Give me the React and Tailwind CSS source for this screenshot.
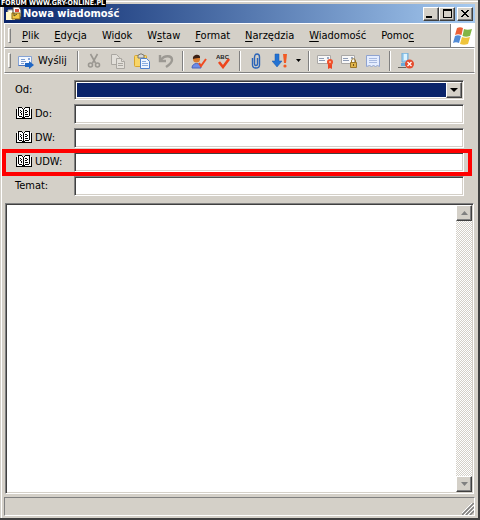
import React from 'react';

const menuItems = [
  { before: '', key: 'P', after: 'lik' },
  { before: '', key: 'E', after: 'dycja' },
  { before: 'Wi', key: 'd', after: 'ok' },
  { before: 'W', key: 's', after: 'taw' },
  { before: '', key: 'F', after: 'ormat' },
  { before: '', key: 'N', after: 'arzędzia' },
  { before: '', key: 'W', after: 'iadomość' },
  { before: 'Pomo', key: 'c', after: '' },
];

// Raised and sunken edges shared by the window parts
const raised = 'border border-t-white border-l-white border-r-[#404040] border-b-[#404040] bg-[#d4d0c8] shadow-[inset_-1px_-1px_0_#808080]';
const sunken = 'border border-t-[#808080] border-l-[#808080] border-r-white border-b-white shadow-[inset_1px_1px_0_#404040,inset_-1px_-1px_0_#d4d0c8]';

function MailIcon() {
  return (
    <svg className="size-4 shrink-0" viewBox="0 0 16 16">
      <path d="M.5 3.500h13v9H.5z" fill="#f4f8ff" stroke="#86a3d4" />
      <path d="M.5 12.500h8" stroke="#4a74bd" />
      <path d="M3 6.500h4M3 8.500h5M3 10.500h3" stroke="#7c9ccf" />
      <path d="M10 5h2v2h-2z" fill="#86a6da" />
      <path d="M7 10h4V8l5 4-5 4v-2H7z" fill="#1f66c4" />
    </svg>
  );
}

function CutIcon() {
  return (
    <svg className="size-4" viewBox="0 0 16 16" fill="none" stroke="#9a9791" strokeWidth="1.600">
      <path d="M4.500 1l5 9M11.500 1l-5 9" />
      <circle cx="4.500" cy="12" r="2" />
      <circle cx="11.500" cy="12" r="2" />
    </svg>
  );
}

function CopyIcon() {
  return (
    <svg className="size-4" viewBox="0 0 16 16" fill="#e2dfd9" stroke="#aaa7a1">
      <path d="M1.500 1.500h5l3 3v7h-8z" />
      <path d="M6.500 5.500h5l3 3v7h-8z" />
      <path d="M11.500 5.500v3h3M8 10.500h5M8 12.500h5" />
    </svg>
  );
}

function PasteIcon() {
  return (
    <svg className="size-4" viewBox="0 0 16 16">
      <rect x=".5" y="2.500" width="12" height="11" rx="1" fill="#f8d568" stroke="#d8a52c" />
      <path d="M4 2h1l1-1h2l1 1h1v3H4z" fill="#d8d8d8" stroke="#77766f" />
      <path d="M6.500 5.500h6l3 3v7h-9z" fill="#eef5ff" stroke="#4f80cb" />
      <path d="M8 8.500h4M8 10.500h6M8 12.500h6" stroke="#89acdf" />
    </svg>
  );
}

function UndoIcon() {
  return (
    <svg className="size-4" viewBox="0 0 16 16" fill="none" stroke="#9c9993" strokeWidth="2.400">
      <path d="M2 2v6h6" />
      <path d="M3 7c3-5 11-5 11 0 0 3-3 5-6 7" />
    </svg>
  );
}

function NamesIcon() {
  return (
    <svg className="size-4" viewBox="0 0 16 16">
      <path d="M1 15c0-6 9-6 9 0z" fill="#6e8ce8" stroke="#4964bd" />
      <circle cx="5.500" cy="6" r="3.500" fill="#d8792c" />
      <path d="M2 6c-1-5 8-6 7-1-3 0-4 0-7 1z" fill="#3b2116" />
      <path d="M8 10l2 3 5-7" fill="none" stroke="#f04a20" strokeWidth="2" />
    </svg>
  );
}

function SpellIcon() {
  return (
    <svg className="size-4" viewBox="0 0 16 16">
      <text x="1" y="6" fontSize="6" fontWeight="bold" fontFamily="Liberation Sans, sans-serif" fill="#222">ABC</text>
      <path d="M4 9l4 5 6-8" fill="none" stroke="#ee451c" strokeWidth="2.600" />
    </svg>
  );
}

function ClipIcon() {
  return (
    <svg className="size-4" viewBox="0 0 16 16" fill="none" stroke="#2a64b8" strokeWidth="1.400">
      <path d="M4.500 5v7c0 4 7 4 7 0V4c0-4-5-4-5 0v7c0 2 3 2 3 0V5" />
    </svg>
  );
}

function PriorityIcon() {
  return (
    <svg className="size-4" viewBox="0 0 16 16">
      <path d="M3 1h4v7h3l-5 6-5-6h3z" fill="#2272d2" stroke="#1a59ad" strokeWidth=".5" />
      <path d="M11 1h4l-1 9h-2z" fill="#f25a24" />
      <circle cx="13" cy="13" r="1.600" fill="#f25a24" />
    </svg>
  );
}

function SignIcon() {
  return (
    <svg className="size-4" viewBox="0 0 16 16">
      <path d="M.5 2.500h13v8H.5z" fill="#f8f8f8" stroke="#aaa8a6" />
      <path d="M2 5.500h5M2 7.500h6" stroke="#8e9bb4" />
      <path d="M10 4h2v2h-2z" fill="#9aa7c0" />
      <path d="M11 11v5l2-1 2 1v-5z" fill="#ed4624" />
      <circle cx="13" cy="9" r="3" fill="#f0512c" />
      <circle cx="13" cy="9" r="1" fill="#ffc1a2" />
    </svg>
  );
}

function EncryptIcon() {
  return (
    <svg className="size-4" viewBox="0 0 16 16">
      <path d="M.5 2.500h13v8H.5z" fill="#f8f8f8" stroke="#aaa8a6" />
      <path d="M2 5.500h5M2 7.500h6" stroke="#8e9bb4" />
      <path d="M10 4h2v2h-2z" fill="#9aa7c0" />
      <path d="M10.500 10V8c0-3 4-3 4 0v2" fill="none" stroke="#987526" />
      <path d="M9.500 9.500h6v5h-6z" fill="#dfb44c" stroke="#9b7628" />
      <path d="M12 11h1v2h-1z" fill="#70521a" />
    </svg>
  );
}

function ReceiptIcon() {
  return (
    <svg className="size-4" viewBox="0 0 16 16">
      <path d="M1.500 2.500h13v11l-2-1-2 1-2-1-2 1-2-1-3 1z" fill="#e4edff" stroke="#8fa3d0" />
      <path d="M4 5.500h8M4 7.500h8M4 9.500h8" stroke="#a7b9df" />
    </svg>
  );
}

function OfflineIcon() {
  return (
    <svg className="size-4" viewBox="0 0 16 16">
      <path d="M4 0h6v9H4z" fill="#a4d5f5" stroke="#6fa9d3" />
      <path d="M6 1h3v6H6z" fill="#ddf3ff" />
      <path d="M3 10h7v3H3z" fill="#69a9da" />
      <path d="M0 14.500h8" stroke="#66645f" />
      <circle cx="11.500" cy="11" r="4.500" fill="#e44b2d" />
      <path d="M9.500 9l4 4M13.500 9l-4 4" stroke="#fff" strokeWidth="1.300" />
    </svg>
  );
}

function WindowsLogo() {
  return (
    <svg className="size-5" viewBox="0 0 20 20">
      <path d="M4 2c2-1 4-1 6 0L8.500 9C6 8 4 8 2 9z" fill="#ec6137" />
      <path d="M11 3c2 1 5 1 8 0l-2 7c-3 1-5 1-7.500 0z" fill="#82b545" />
      <path d="M2 10c2-1 4-1 6 0l-2 7c-2-1-4-1-6 0z" fill="#528bd5" />
      <path d="M9 11c2 1 5 1 8 0l-2 7c-3 1-5 1-8 0z" fill="#efc43b" />
    </svg>
  );
}

function BookIcon() {
  return (
    <svg className="h-3 w-4 shrink-0" viewBox="0 0 16 12" shapeRendering="crispEdges">
      <path d="M1 1h14v10H1z" fill="#fff" />
      {/* cover and spine */}
      <path d="M2 0h4v1H2zM9 0h4v1H9zM6 1h1v1H6zM8 1h1v1H8zM7 2h1v9H7zM2 0h1v9H2zM13 0h1v9h-1zM0 2h1v10H0zM15 2h1v10h-1zM3 9h3v1H3zM9 9h4v1H9zM6 10h1v1H6zM8 10h1v1H8zM0 11h15v1H0z" />
      {/* lettering on the pages */}
      <path d="M4 3h1v1H4zM5 4h1v1H5zM4 5h1v1H4zM5 6h1v2H5zM9 3h2v1H9zM11 4h1v1h-1zM9 5h2v1H9zM9 7h3v1H9z" />
    </svg>
  );
}

function TitleIcon() {
  return (
    <svg className="size-4 shrink-0" viewBox="0 0 16 16">
      <path d="M2 4h7v9H2z" fill="#fff" stroke="#b5b59e" />
      <path d="M0 6h9v8H0z" fill="#fff8c8" />
      <path d="M7 1h6l2 3v7H7z" fill="#fff" stroke="#45423a" />
      <path d="M9 3h4v3H9z" fill="#db4c3a" />
      <path d="M6 7h8v6H6z" fill="#f3c842" stroke="#8c6919" />
      <path d="M8 7v3l3-2" fill="none" stroke="#574b25" />
    </svg>
  );
}

function Grip() {
  return <div className="my-1 ml-[3px] w-[3px] self-stretch border border-t-white border-l-white border-r-[#808080] border-b-[#808080]" />;
}

function Separator() {
  return <div className="mx-1 h-5 w-px bg-[#808080] shadow-[1px_0_0_#fff]" />;
}

function ToolButton({ label, children }) {
  return (
    <button type="button" aria-label={label} className="flex h-6 w-6 shrink-0 items-center justify-center">
      {children}
    </button>
  );
}

function TitleBar() {
  return (
    <header className="flex h-[19px] shrink-0 items-center bg-linear-to-r from-[#0a246a] to-[#a6caf0] px-0.5 text-white">
      <TitleIcon />
      <h1 className="ml-px flex-1 truncate font-bold">Nowa wiadomość</h1>
      <button type="button" aria-label="Minimalizuj" className={`flex h-[14px] w-4 items-end justify-center pb-0.5 ${raised}`}>
        <span className="mr-1 h-0.5 w-1.5 bg-black" />
      </button>
      <button type="button" aria-label="Maksymalizuj" className={`flex h-[14px] w-4 items-center justify-center ${raised}`}>
        <span className="h-[9px] w-[9px] border border-t-2 border-black" />
      </button>
      <button type="button" aria-label="Zamknij" className={`ml-0.5 flex h-[14px] w-4 items-center justify-center ${raised}`}>
        <svg className="h-[7px] w-2" viewBox="0 0 8 7" shapeRendering="crispEdges">
          <path d="M0 0h2v1h1v1h2V1h1V0h2v1H7v1H6v1H5v1h1v1h1v1h1v1H6V6H5V5H3v1H2v1H0V6h1V5h1V4h1V3H2V2H1V1H0z" fill="#000" />
        </svg>
      </button>
    </header>
  );
}

function MenuBar() {
  return (
    <nav className="flex h-[25px] shrink-0 items-center border border-t-white border-l-white border-r-white border-b-[#808080]">
      <Grip />
      <div className="ml-1 flex flex-1 items-center gap-px">
        {menuItems.map((item) => (
          <button type="button" key={item.before + item.key + item.after} className="px-[7px]">
            {item.before}
            <span className="underline underline-offset-2">{item.key}</span>
            {item.after}
          </button>
        ))}
      </div>
      <div className="flex w-6 items-center justify-center self-stretch border-l border-[#808080] bg-white">
        <WindowsLogo />
      </div>
    </nav>
  );
}

function Toolbar() {
  return (
    <div role="toolbar" className="flex h-[25px] shrink-0 items-center border border-t-white border-l-white border-r-white border-b-[#808080]">
      <Grip />
      <button type="button" className="ml-1 flex h-6 w-[58px] items-center gap-1 pl-[3px]">
        <MailIcon />
        Wyślij
      </button>
      <Separator />
      <ToolButton label="Wytnij"><CutIcon /></ToolButton>
      <ToolButton label="Kopiuj"><CopyIcon /></ToolButton>
      <ToolButton label="Wklej"><PasteIcon /></ToolButton>
      <ToolButton label="Cofnij"><UndoIcon /></ToolButton>
      <Separator />
      <ToolButton label="Sprawdź nazwy"><NamesIcon /></ToolButton>
      <ToolButton label="Pisownia"><SpellIcon /></ToolButton>
      <Separator />
      <ToolButton label="Załącz"><ClipIcon /></ToolButton>
      <ToolButton label="Priorytet"><PriorityIcon /></ToolButton>
      <button type="button" aria-label="Wybierz priorytet" className="flex h-6 w-3 items-center justify-center">
        <svg className="h-[3px] w-[5px]" viewBox="0 0 5 3"><path d="M0 0h5L2.500 3z" /></svg>
      </button>
      <Separator />
      <ToolButton label="Podpisz"><SignIcon /></ToolButton>
      <ToolButton label="Szyfruj"><EncryptIcon /></ToolButton>
      <ToolButton label="Potwierdzenie"><ReceiptIcon /></ToolButton>
      <Separator />
      <ToolButton label="Offline"><OfflineIcon /></ToolButton>
    </div>
  );
}

function Field({ id, label, book, highlight }) {
  return (
    <div className="relative flex h-5 items-center">
      <label htmlFor={id} className="flex w-[59px] shrink-0 items-center gap-[3px] pb-0.5">
        {book && <span className="ml-px"><BookIcon /></span>}
        {label}
      </label>
      <input id={id} type="text" className={`h-5 min-w-0 flex-1 bg-white px-1 outline-none ${sunken}`} />
      {highlight && <div className="pointer-events-none absolute -top-[3px] -right-2 -bottom-1 -left-[13px] border-4 border-[#f00]" />}
    </div>
  );
}

function Headers() {
  return (
    <form className="flex flex-col gap-1 px-2.5 pt-1.5 pb-[7px]">
      <div className="flex h-5 items-center">
        <label htmlFor="from" className="w-[59px] shrink-0 pb-0.5">Od:</label>
        <div className={`relative h-5 min-w-0 flex-1 bg-white p-0.5 ${sunken}`}>
          <select id="from" className="block h-full w-full appearance-none bg-[#0a246a] text-white outline-none">
            <option></option>
          </select>
          <span className={`pointer-events-none absolute top-px right-px bottom-px flex w-4 items-center justify-center ${raised}`}>
            <svg className="h-1 w-2" viewBox="0 0 8 4"><path d="M0 0h8L4 4z" /></svg>
          </span>
        </div>
      </div>
      <Field id="to" label="Do:" book />
      <Field id="cc" label="DW:" book />
      <Field id="bcc" label="UDW:" book highlight />
      <Field id="subject" label="Temat:" />
    </form>
  );
}

function ScrollButton({ label, path }) {
  return (
    <button type="button" aria-label={label} className={`flex h-4 w-4 items-center justify-center ${raised}`}>
      <svg className="h-1 w-[7px]" viewBox="0 0 7 4"><path d={path} fill="#808080" /></svg>
    </button>
  );
}

export default function App() {
  return (
    <div className="relative flex h-screen w-full flex-col border-r-2 border-b-2 border-[#404040] bg-[#d4d0c8] pt-1 pr-[3px] pb-0.5 pl-1 font-['DejaVu_Sans_Condensed','DejaVu_Sans',sans-serif] text-[11px] leading-[13px] text-black shadow-[inset_1px_1px_0_#d4d0c8,inset_2px_2px_0_#fff]">
      <div className="absolute top-0 left-0 bg-black px-px font-['DejaVu_Sans_Condensed','DejaVu_Sans',sans-serif] text-[7px] leading-[7px] font-bold whitespace-nowrap text-white">
        FORUM WWW.GRY-ONLINE.PL
      </div>
      <TitleBar />
      <MenuBar />
      <Toolbar />
      <main className="flex min-h-0 flex-1 flex-col border-t border-white px-px">
        <Headers />
        <div className={`flex min-h-0 flex-1 bg-white p-px ${sunken}`}>
          <textarea aria-label="Treść wiadomości" className="min-w-0 flex-1 resize-none bg-transparent p-1 outline-none" />
          <div className="flex w-4 flex-col justify-between bg-[repeating-conic-gradient(#fff_0_25%,#d4d0c8_0_50%)] bg-size-[2px_2px]">
            <ScrollButton label="W górę" path="M0 4h7L3.500 0z" />
            <ScrollButton label="W dół" path="M0 0h7L3.500 4z" />
          </div>
        </div>
      </main>
      <footer className="mt-[3px] flex h-[19px] shrink-0 items-end justify-end border border-t-[#808080] border-l-[#808080] border-r-white border-b-white">
        <svg className="size-3" viewBox="0 0 12 12" strokeWidth="1.500">
          <path d="M0 12L12 0M4 12l8-8M8 12l4-4" stroke="#808080" />
          <path d="M-2 12L12-2M2 12L12 2M6 12l6-6" stroke="#fff" strokeWidth="1" />
        </svg>
      </footer>
    </div>
  );
}
